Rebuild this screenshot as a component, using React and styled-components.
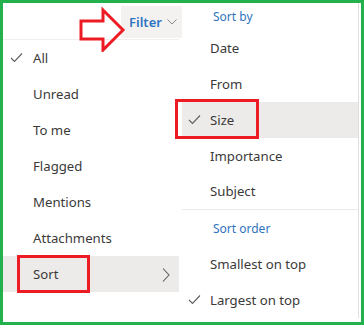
import React from "react";
import styled, { createGlobalStyle } from "styled-components";

const Global = createGlobalStyle`
  html, body { margin: 0; padding: 0; background: #fff; }
  body { font-family: "Noto Sans", "Open Sans", sans-serif; color: #323130; }
`;

const Frame = styled.div`
  position: relative;
  width: 364px;
  height: 325px;
  box-sizing: border-box;
  border: 3px solid #22b14c;
  display: flex;
  overflow: hidden;
  background: #fff;
`;

const LeftMenu = styled.div`
  width: 176px;
  display: flex;
  flex-direction: column;
`;

const Header = styled.div`
  height: 37px;
  border-bottom: 1px solid #f0efee;
  display: flex;
  align-items: flex-end;
  justify-content: flex-end;
  padding-bottom: 1px;
  box-sizing: border-box;
`;

const FilterButton = styled.div`
  height: 32px;
  width: 61px;
  margin-right: -3px;
  background: #f3f2f1;
  display: flex;
  align-items: center;
  padding-left: 8px;
  box-sizing: border-box;
  gap: 5px;
  color: #2f74c0;
  font-size: 13px;
  font-weight: 600;
`;

const Item = styled.div`
  height: 36px;
  display: flex;
  align-items: center;
  position: relative;
  padding-left: ${(p) => p.$indent}px;
  font-size: 13.2px;
  color: #3b3a39;
  background: ${(p) => (p.$active ? "#edebe9" : "transparent")};
`;

const Check = styled.svg`
  position: absolute;
  left: ${(p) => p.$left}px;
  top: 12px;
`;

const Chevron = styled.svg`
  position: absolute;
  right: 9px;
  top: 12px;
`;

const SubMenu = styled.div`
  flex: 1;
  display: flex;
  flex-direction: column;
  margin-right: 2px;
  border-right: 1px solid #e1dfdd;
  margin-bottom: 4px;
  margin-left: 3px;
`;

const GroupTitle = styled.div`
  height: ${(p) => p.$h}px;
  display: flex;
  align-items: center;
  padding-left: 31px;
  font-size: 12px;
  color: #2f74c0;
`;

const Divider = styled.div`
  height: 1px;
  background: #edebe9;
`;

const RedBox = styled.div`
  position: absolute;
  left: ${(p) => p.$x}px;
  top: ${(p) => p.$y}px;
  width: ${(p) => p.$w}px;
  height: ${(p) => p.$h}px;
  border: 3px solid #ed1c24;
  box-sizing: border-box;
`;

const Arrow = styled.svg`
  position: absolute;
  left: 74px;
  top: 3px;
`;

const CheckIcon = ({ left }) => (
  <Check $left={left} width="13" height="11" viewBox="0 0 13 11">
    <path d="M1 6 L4.5 9.5 L12 1.5" fill="none" stroke="#605e5c" strokeWidth="1.1" />
  </Check>
);

const leftItems = ["All", "Unread", "To me", "Flagged", "Mentions", "Attachments"];

export default function App() {
  return (
    <>
      <Global />
      <Frame>
        <LeftMenu>
          <Header>
            <FilterButton>
              Filter
              <svg width="10" height="6" viewBox="0 0 10 6">
                <path d="M0.5 0.5 L5 5 L9.5 0.5" fill="none" stroke="#8a8886" strokeWidth="1" />
              </svg>
            </FilterButton>
          </Header>
          {leftItems.map((t, i) => (
            <Item key={t} $indent={30}>
              {i === 0 && <CheckIcon left={7} />}
              {t}
            </Item>
          ))}
          <Item $indent={30} $active>
            Sort
            <Chevron width="8" height="14" viewBox="0 0 8 14">
              <path d="M1 0.5 L7 7 L1 13.5" fill="none" stroke="#605e5c" strokeWidth="1.1" />
            </Chevron>
          </Item>
        </LeftMenu>
        <SubMenu>
          <GroupTitle $h={27}>Sort by</GroupTitle>
          <Item $indent={28}>Date</Item>
          <Item $indent={28}>From</Item>
          <Item $indent={28} $active>
            <CheckIcon left={6} />
            Size
          </Item>
          <Item $indent={28}>Importance</Item>
          <Item $indent={28}>Subject</Item>
          <Divider />
          <GroupTitle $h={36}>Sort order</GroupTitle>
          <Item $indent={28}>Smallest on top</Item>
          <Item $indent={28}>
            <CheckIcon left={6} />
            Largest on top
          </Item>
        </SubMenu>
        <RedBox $x={172} $y={96} $w={84} $h={40} />
        <RedBox $x={14} $y={252} $w={73} $h={38} />
        <Arrow width="52" height="46" viewBox="0 0 52 46">
          <path
            d="M4 15 L26 15 L26 4 L46 24 L26 44 L26 33 L4 33 Z"
            fill="none"
            stroke="#ed1c24"
            strokeWidth="3"
          />
        </Arrow>
      </Frame>
    </>
  );
}
